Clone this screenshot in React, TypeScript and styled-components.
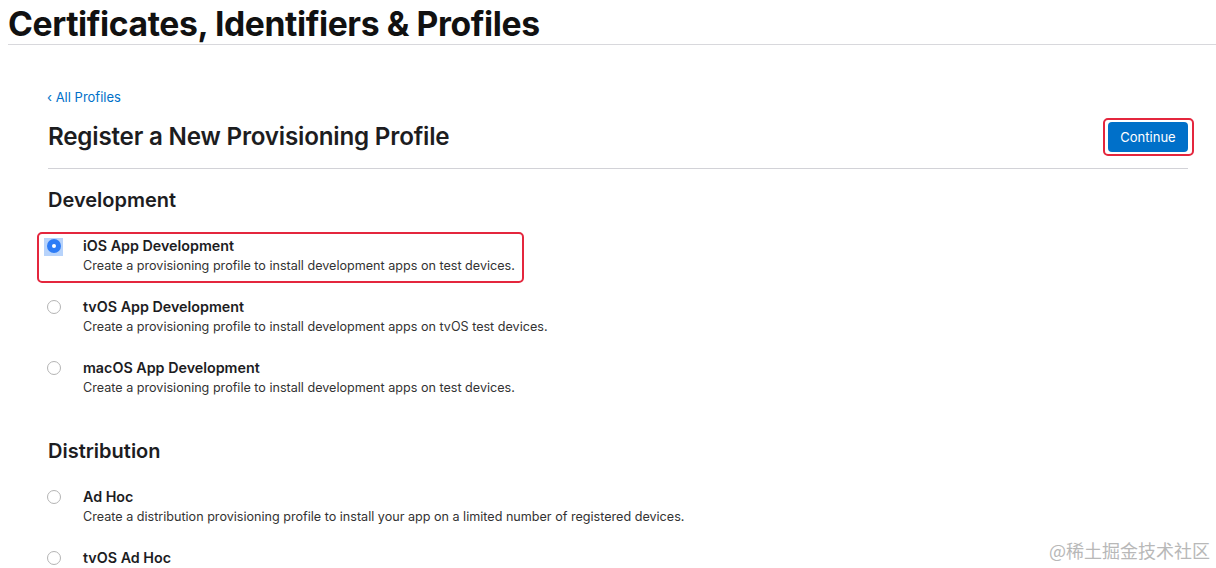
import { FC } from 'react'
import styled, { createGlobalStyle } from 'styled-components'

const GlobalStyle = createGlobalStyle`
    body {
        margin: 0;
        background: #fff;
        font-family: Inter, "Liberation Sans", "Noto Sans CJK SC", sans-serif;
        color: #1d1d1f;
        -webkit-font-smoothing: antialiased;
    }
`;

const Page = styled.div`
    width: 1216px;
    height: 568px;
    overflow: hidden;
    position: relative;
`;

const Header = styled.header`
    margin-left: 8px;
    border-bottom: 1px solid #d8d8dc;
    height: 44px;
`;

const PageTitle = styled.h1`
    margin: 0;
    padding-top: 5px;
    font-size: 33.7px;
    line-height: 38px;
    font-weight: 700;
    letter-spacing: -0.4px;
    color: #111;
`;

const Main = styled.main`
    margin: 0 28px 0 48px;
    padding-top: 44px;
`;

const BackLink = styled.a`
    display: block;
    margin-left: -1px;
    font-size: 13px;
    line-height: 16px;
    color: #0070c9;
    text-decoration: none;
`;

const TitleRow = styled.div`
    display: flex;
    align-items: center;
    justify-content: space-between;
    height: 63px;
    border-bottom: 1px solid #d2d2d7;
`;

const Heading = styled.h2`
    margin: 0;
    font-size: 24.2px;
    line-height: 30px;
    font-weight: 600;
    letter-spacing: -0.2px;
    color: #1d1d1f;
`;

const Highlight = styled.div`
    border: 2px solid #e4263d;
    border-radius: 5px;
    padding: 2px 4px 2px 3px;
    margin-right: -6px;
    display: flex;
`;

const Button = styled.button`
    background: #0070c9;
    color: #fff;
    border: none;
    border-radius: 4px;
    font-family: inherit;
    font-size: 13px;
    height: 30px;
    width: 80px;
    padding: 0;
    cursor: pointer;
`;

const Section = styled.section<{ top: number }>`
    padding-top: ${p => p.top}px;
`;

const SectionTitle = styled.h3`
    margin: 0;
    font-size: 20px;
    font-weight: 600;
    line-height: 24px;
    color: #1d1d1f;
`;

const OptionList = styled.div`
    display: flex;
    flex-direction: column;
    gap: 22px;
    margin: 25px 0 0 -1px;
`;

const Option = styled.label<{ marked?: boolean }>`
    display: flex;
    align-items: flex-start;
    gap: 22px;
    width: fit-content;
    border-radius: 5px;
    ${p => p.marked && `
        border: 2px solid #e4263d;
        padding: 3px 7px 5px 8px;
        margin: -5px 0 -7px -10px;
    `}
`;

const RadioWrap = styled.span<{ selected?: boolean }>`
    width: 14px;
    height: 14px;
    margin-top: 2px;
    flex: none;
    position: relative;
    &::before {
        content: '';
        display: ${p => (p.selected ? 'block' : 'none')};
        position: absolute;
        left: -3px;
        top: -1px;
        width: 19px;
        height: 18px;
        background: #b7d3fb;
    }
`;

const Radio = styled.span<{ selected?: boolean }>`
    position: relative;
    display: block;
    box-sizing: border-box;
    width: 14px;
    height: 14px;
    border-radius: 50%;
    border: ${p => (p.selected ? 'none' : '1px solid #b4b4b4')};
    background: ${p => (p.selected ? '#2d7cf6' : '#fff')};
    &::after {
        content: '';
        display: ${p => (p.selected ? 'block' : 'none')};
        position: absolute;
        left: 5px;
        top: 5px;
        width: 4px;
        height: 4px;
        border-radius: 50%;
        background: #fff;
    }
`;

const OptionText = styled.div`
    display: flex;
    flex-direction: column;
    gap: 1px;
`;

const OptionName = styled.span`
    font-size: 14.3px;
    font-weight: 600;
    line-height: 18px;
    color: #1d1d1f;
`;

const OptionDesc = styled.span`
    font-size: 12.6px;
    line-height: 20px;
    color: #333;
`;

const Watermark = styled.div`
    position: absolute;
    right: 6px;
    bottom: 6px;
    font-size: 18px;
    line-height: 24px;
    color: #b8b8b8;
    font-family: "Noto Sans CJK SC", sans-serif;
`;

interface Item {
    name: string
    desc?: string
    selected?: boolean
}

const development: Item[] = [
    { name: 'iOS App Development', desc: 'Create a provisioning profile to install development apps on test devices.', selected: true },
    { name: 'tvOS App Development', desc: 'Create a provisioning profile to install development apps on tvOS test devices.' },
    { name: 'macOS App Development', desc: 'Create a provisioning profile to install development apps on test devices.' },
]

// the last row is cut by the bottom of the window, only its title shows
const distribution: Item[] = [
    { name: 'Ad Hoc', desc: 'Create a distribution provisioning profile to install your app on a limited number of registered devices.' },
    { name: 'tvOS Ad Hoc' },
]

const ProfileOption: FC<{ item: Item }> = ({ item }) => (
    <Option marked={item.selected}>
        <RadioWrap selected={item.selected}>
            <Radio selected={item.selected} />
        </RadioWrap>
        <OptionText>
            <OptionName>{item.name}</OptionName>
            {item.desc && <OptionDesc>{item.desc}</OptionDesc>}
        </OptionText>
    </Option>
)

const App: FC = () => {
    return (
        <Page>
            <GlobalStyle />
            <Header>
                <PageTitle>Certificates, Identifiers &amp; Profiles</PageTitle>
            </Header>
            <Main>
                <BackLink href="#">‹ All Profiles</BackLink>
                <TitleRow>
                    <Heading>Register a New Provisioning Profile</Heading>
                    <Highlight>
                        <Button>Continue</Button>
                    </Highlight>
                </TitleRow>
                <Section top={19}>
                    <SectionTitle>Development</SectionTitle>
                    <OptionList>
                        {development.map(item => <ProfileOption key={item.name} item={item} />)}
                    </OptionList>
                </Section>
                <Section top={41}>
                    <SectionTitle>Distribution</SectionTitle>
                    <OptionList>
                        {distribution.map(item => <ProfileOption key={item.name} item={item} />)}
                    </OptionList>
                </Section>
            </Main>
            <Watermark>@稀土掘金技术社区</Watermark>
        </Page>
    )
}

export default App
